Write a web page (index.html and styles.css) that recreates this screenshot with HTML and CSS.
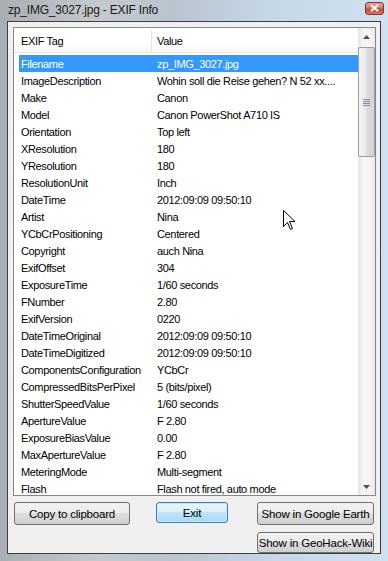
FILE: index.html
```html
<!DOCTYPE html>
<html lang="en">

<head>
    <meta charset="UTF-8">
    <meta name="viewport" content="width=device-width, initial-scale=1.0">
    <title>EXIF Info</title>
    <link rel="stylesheet" href="styles.css">
</head>

<body>
    <div class="window">
        <div class="titlebar">
            <span class="title">zp_IMG_3027.jpg - EXIF Info</span>
            <a href="javascript:" class="close">
                <svg width="9" height="8" viewBox="0 0 9 8"><path d="M1 1 L8 7 M8 1 L1 7" stroke="#fff" stroke-width="2"/></svg>
            </a>
        </div>
        <div class="client">
            <div class="listview">
                <div class="list">
                    <div class="header">
                        <div class="col-tag">EXIF Tag</div>
                        <div class="col-val">Value</div>
                    </div>
                    <div class="rows">
                        <div class="row selected"><span class="tag">Filename</span><span class="val">zp_IMG_3027.jpg</span></div>
                        <div class="row"><span class="tag">ImageDescription</span><span class="val">Wohin soll die Reise gehen? N 52 xx....</span></div>
                        <div class="row"><span class="tag">Make</span><span class="val">Canon</span></div>
                        <div class="row"><span class="tag">Model</span><span class="val">Canon PowerShot A710 IS</span></div>
                        <div class="row"><span class="tag">Orientation</span><span class="val">Top left</span></div>
                        <div class="row"><span class="tag">XResolution</span><span class="val">180</span></div>
                        <div class="row"><span class="tag">YResolution</span><span class="val">180</span></div>
                        <div class="row"><span class="tag">ResolutionUnit</span><span class="val">Inch</span></div>
                        <div class="row"><span class="tag">DateTime</span><span class="val">2012:09:09 09:50:10</span></div>
                        <div class="row"><span class="tag">Artist</span><span class="val">Nina</span></div>
                        <div class="row"><span class="tag">YCbCrPositioning</span><span class="val">Centered</span></div>
                        <div class="row"><span class="tag">Copyright</span><span class="val">auch Nina</span></div>
                        <div class="row"><span class="tag">ExifOffset</span><span class="val">304</span></div>
                        <div class="row"><span class="tag">ExposureTime</span><span class="val">1/60 seconds</span></div>
                        <div class="row"><span class="tag">FNumber</span><span class="val">2.80</span></div>
                        <div class="row"><span class="tag">ExifVersion</span><span class="val">0220</span></div>
                        <div class="row"><span class="tag">DateTimeOriginal</span><span class="val">2012:09:09 09:50:10</span></div>
                        <div class="row"><span class="tag">DateTimeDigitized</span><span class="val">2012:09:09 09:50:10</span></div>
                        <div class="row"><span class="tag">ComponentsConfiguration</span><span class="val">YCbCr</span></div>
                        <div class="row"><span class="tag">CompressedBitsPerPixel</span><span class="val">5 (bits/pixel)</span></div>
                        <div class="row"><span class="tag">ShutterSpeedValue</span><span class="val">1/60 seconds</span></div>
                        <div class="row"><span class="tag">ApertureValue</span><span class="val">F 2.80</span></div>
                        <div class="row"><span class="tag">ExposureBiasValue</span><span class="val">0.00</span></div>
                        <div class="row"><span class="tag">MaxApertureValue</span><span class="val">F 2.80</span></div>
                        <div class="row"><span class="tag">MeteringMode</span><span class="val">Multi-segment</span></div>
                        <div class="row"><span class="tag">Flash</span><span class="val">Flash not fired, auto mode</span></div>
                    </div>
                </div>
                <div class="scrollbar">
                    <div class="arrow">
                        <svg width="7" height="4" viewBox="0 0 7 4"><path d="M0 4 L3.5 0 L7 4 Z" fill="#4d4d4d"/></svg>
                    </div>
                    <div class="track">
                        <div class="thumb">
                            <svg width="7" height="7" viewBox="0 0 7 7"><path d="M0 0.5 H7 M0 2.5 H7 M0 4.5 H7 M0 6.5 H7" stroke="#8a8e96" stroke-width="1"/></svg>
                        </div>
                    </div>
                    <div class="arrow">
                        <svg width="7" height="4" viewBox="0 0 7 4"><path d="M0 0 L3.5 4 L7 0 Z" fill="#4d4d4d"/></svg>
                    </div>
                </div>
            </div>

            <div class="buttons">
                <a href="javascript:" class="btn copy">Copy to clipboard</a>
                <a href="javascript:" class="btn exit">Exit</a>
                <div class="geo">
                    <a href="javascript:" class="btn">Show in Google Earth</a>
                    <a href="javascript:" class="btn">Show in GeoHack-Wiki</a>
                </div>
            </div>
        </div>
    </div>

    <!-- mouse pointer -->
    <svg class="cursor" width="13" height="21" viewBox="0 0 13 21">
        <path d="M0.5 0.5 V16.5 L4.5 12.5 L7.5 19.5 L9.5 18.5 L6.5 11.5 H12 Z" fill="#fff" stroke="#000" stroke-width="1"/>
    </svg>
</body>

</html>
```

FILE: styles.css
```css
* {
    margin: 0;
    padding: 0;
    box-sizing: border-box;
}

body {
    width: 388px;
    height: 561px;
    overflow: hidden;
    font-family: "Liberation Sans", Arial, sans-serif;
    font-size: 11px;
    letter-spacing: -0.35px;
    color: #000;
    position: relative;
}

a {
    color: inherit;
    text-decoration: none;
}

/* glass frame */
.window {
    width: 388px;
    height: 561px;
    padding: 0 7px 7px 7px;
    background: linear-gradient(90deg, #a9aeb3 0%, #c4c9cd 25%, #b9c4cf 45%, #c6d7e8 70%, #cfe0f0 100%);
    display: flex;
    flex-direction: column;
}

.titlebar {
    height: 23px;
    display: flex;
    align-items: center;
    justify-content: space-between;
    padding-left: 1px;
}

.title {
    font-size: 12px;
    letter-spacing: -0.2px;
    color: #1a1a1a;
    margin-top: -2px;
}

.close {
    width: 19px;
    height: 13px;
    margin-top: -5px;
    margin-right: -3px;
    border: 1px solid #7a3a36;
    border-radius: 3px;
    background: linear-gradient(180deg, #e8a493 0%, #d47a66 45%, #c24a34 55%, #d67762 100%);
    display: flex;
    align-items: center;
    justify-content: center;
}

.client {
    flex: 1;
    background: #f0f0f0;
    border: 1px solid #3b3f44;
    padding: 5px 5px 0 5px;
    display: flex;
    flex-direction: column;
}

/* list view */
.listview {
    height: 469px;
    width: 363px;
    border: 1px solid #828790;
    background: #fff;
    display: flex;
    overflow: hidden;
}

.list {
    flex: 1;
    overflow: hidden;
}

.header {
    height: 25px;
    display: flex;
    align-items: center;
    border-bottom: 1px solid #e5e5e5;
    background: linear-gradient(180deg, #fff 0%, #fff 60%, #f7f8f9 100%);
    margin-bottom: 2px;
    padding-top: 2px;
}

.col-tag {
    width: 138px;
    padding-left: 7px;
    height: 100%;
    display: flex;
    align-items: center;
    border-right: 1px solid #e5e5e5;
}

.col-val {
    padding-left: 5px;
}

.row {
    height: 17px;
    display: flex;
    align-items: center;
    margin-left: 5px;
    white-space: nowrap;
}

.row.selected {
    background: #3399ff;
    color: #fff;
}

.tag {
    width: 138px;
    padding-left: 2px;
    flex-shrink: 0;
}

/* scroll bar */
.scrollbar {
    width: 17px;
    display: flex;
    flex-direction: column;
    background: linear-gradient(90deg, #e3e3e3, #f5f5f5 30%, #f5f5f5 70%, #e8e8e8);
}

.arrow {
    height: 17px;
    display: flex;
    align-items: center;
    justify-content: center;
}

.track {
    flex: 1;
}

.thumb {
    height: 110px;
    margin-top: 2px;
    border: 1px solid #9a9da3;
    border-radius: 2px;
    background: linear-gradient(90deg, #f4f4f5 0%, #e9e9eb 45%, #d9dadd 55%, #d4d5d8 100%);
    display: flex;
    align-items: center;
    justify-content: center;
}

/* buttons */
.buttons {
    display: flex;
    padding-top: 6px;
    padding-left: 1px;
}

.btn {
    display: flex;
    align-items: center;
    justify-content: center;
    height: 23px;
    border: 1px solid #707070;
    border-radius: 3px;
    background: linear-gradient(180deg, #f2f2f2 0%, #ebebeb 49%, #dddddd 50%, #cfcfcf 100%);
    font-size: 11.5px;
    letter-spacing: -0.2px;
    white-space: nowrap;
}

.copy {
    width: 116px;
}

.exit {
    width: 72px;
    height: 21px;
    margin-left: 26px;
    border-color: #3c7fb1;
    background: linear-gradient(180deg, #eaf6fd 0%, #d9f0fc 49%, #bee6fd 50%, #a7d9f5 100%);
    box-shadow: inset 0 0 0 1px #c8e6f8;
}

.geo {
    margin-left: 29px;
    display: flex;
    flex-direction: column;
    gap: 7px;
}

.geo .btn {
    width: 117px;
}

.geo .btn + .btn {
    height: 21px;
}

.cursor {
    position: absolute;
    left: 283px;
    top: 210px;
}
```
